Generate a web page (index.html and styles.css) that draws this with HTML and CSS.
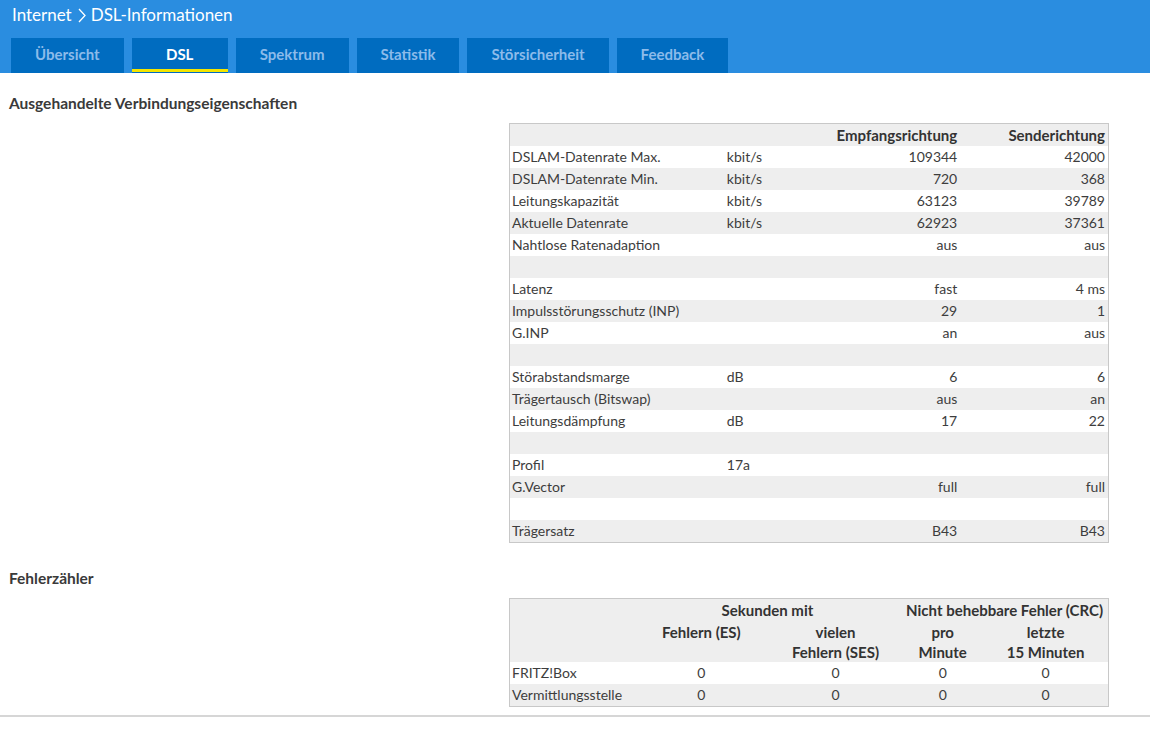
FILE: index.html
```
<!DOCTYPE html>
<html lang="de">
<head>
<meta charset="utf-8">
<title>DSL-Informationen</title>
<link rel="stylesheet" href="styles.css">
</head>
<body>
<header class="top">
  <div class="crumb">
    <span>Internet</span>
    <svg class="chev" width="8" height="15" viewBox="0 0 8 15"><polyline points="1,1 7,7.5 1,14" fill="none" stroke="#ffffff" stroke-width="1.3"/></svg>
    <span>DSL-Informationen</span>
  </div>
  <nav class="tabs">
    <a class="tab">Übersicht</a>
    <a class="tab active">DSL</a>
    <a class="tab">Spektrum</a>
    <a class="tab">Statistik</a>
    <a class="tab">Störsicherheit</a>
    <a class="tab">Feedback</a>
  </nav>
</header>
<main class="content">
  <h2 class="section">Ausgehandelte Verbindungseigenschaften</h2>
  <table class="grid props">
    <colgroup><col class="c1"><col class="c2"><col class="c3"><col class="c4"></colgroup>
    <thead>
      <tr><th></th><th></th><th class="r">Empfangsrichtung</th><th class="r">Senderichtung</th></tr>
    </thead>
    <tbody>
      <tr><td>DSLAM-Datenrate Max.</td><td>kbit/s</td><td class="r">109344</td><td class="r">42000</td></tr>
      <tr><td>DSLAM-Datenrate Min.</td><td>kbit/s</td><td class="r">720</td><td class="r">368</td></tr>
      <tr><td>Leitungskapazität</td><td>kbit/s</td><td class="r">63123</td><td class="r">39789</td></tr>
      <tr><td>Aktuelle Datenrate</td><td>kbit/s</td><td class="r">62923</td><td class="r">37361</td></tr>
      <tr><td>Nahtlose Ratenadaption</td><td></td><td class="r">aus</td><td class="r">aus</td></tr>
      <tr><td></td><td></td><td></td><td></td></tr>
      <tr><td>Latenz</td><td></td><td class="r">fast</td><td class="r">4 ms</td></tr>
      <tr><td>Impulsstörungsschutz (INP)</td><td></td><td class="r">29</td><td class="r">1</td></tr>
      <tr><td>G.INP</td><td></td><td class="r">an</td><td class="r">aus</td></tr>
      <tr><td></td><td></td><td></td><td></td></tr>
      <tr><td>Störabstandsmarge</td><td>dB</td><td class="r">6</td><td class="r">6</td></tr>
      <tr><td>Trägertausch (Bitswap)</td><td></td><td class="r">aus</td><td class="r">an</td></tr>
      <tr><td>Leitungsdämpfung</td><td>dB</td><td class="r">17</td><td class="r">22</td></tr>
      <tr><td></td><td></td><td></td><td></td></tr>
      <tr><td>Profil</td><td>17a</td><td></td><td></td></tr>
      <tr><td>G.Vector</td><td></td><td class="r">full</td><td class="r">full</td></tr>
      <tr><td></td><td></td><td></td><td></td></tr>
      <tr><td>Trägersatz</td><td></td><td class="r">B43</td><td class="r">B43</td></tr>
    </tbody>
  </table>

  <h2 class="section second">Fehlerzähler</h2>
  <table class="grid errors">
    <colgroup><col class="e1"><col class="e2"><col class="e3"><col class="e4"><col class="e5"></colgroup>
    <thead>
      <tr class="h1"><th></th><th colspan="2">Sekunden mit</th><th colspan="2">Nicht behebbare Fehler (CRC)</th></tr>
      <tr class="h2"><th></th><th>Fehlern (ES)</th><th>vielen<br>Fehlern (SES)</th><th>pro<br>Minute</th><th>letzte<br>15 Minuten</th></tr>
    </thead>
    <tbody>
      <tr><td>FRITZ!Box</td><td class="c">0</td><td class="c">0</td><td class="c">0</td><td class="c">0</td></tr>
      <tr><td>Vermittlungsstelle</td><td class="c">0</td><td class="c">0</td><td class="c">0</td><td class="c">0</td></tr>
    </tbody>
  </table>
</main>
<div class="rule"></div>
</body>
</html>
```
FILE: styles.css
```
html, body {
  margin: 0;
  padding: 0;
  background: #ffffff;
}
body {
  font-family: "Lato", "Open Sans", "Liberation Sans", sans-serif;
  font-size: 14px;
  color: #3d3d3d;
}
.top {
  background: #2a8de0;
  height: 73px;
  padding: 3px 0 0 11px;
  box-sizing: border-box;
  display: flex;
  flex-direction: column;
}
.crumb {
  display: flex;
  align-items: center;
  gap: 5px;
  color: #ffffff;
  font-size: 17px;
  line-height: 24px;
  height: 24px;
  padding-left: 1px;
}
.chev {
  display: block;
  margin: 0 0 0 1px;
}
.tabs {
  display: flex;
  gap: 8px;
  margin-top: 11px;
}
.tab {
  box-sizing: border-box;
  height: 35px;
  min-width: 96px;
  padding: 0 24px 3px;
  background: #006cc0;
  color: #8cbbea;
  font-weight: 700;
  font-size: 15px;
  display: flex;
  align-items: center;
  justify-content: center;
  position: relative;
}
.tab.active {
  color: #ffffff;
}
.tab.active::after {
  content: "";
  position: absolute;
  left: 0;
  right: 0;
  bottom: 1px;
  height: 3px;
  background: #f4e500;
}
.content {
  padding: 0 8px;
}
.section {
  margin: 0;
  padding-top: 20px;
  height: 30px;
  line-height: 20px;
  font-size: 15.5px;
  font-weight: 700;
  color: #3a3a3a;
  padding-left: 1px;
}
.section.second {
  padding-top: 25px;
  height: 30px;
}
.grid {
  margin-left: 501px;
  width: 600px;
  border: 1px solid #c8c8c8;
  border-collapse: collapse;
  table-layout: fixed;
}
.grid th, .grid td {
  height: 22px;
  padding: 0 3px 0 2px;
  line-height: 22px;
  white-space: nowrap;
  text-align: left;
  font-weight: 400;
}
.grid th {
  font-weight: 700;
  font-size: 15px;
  color: #333333;
}
.props thead th {
  background: #eeeeee;
}
.props tbody tr:nth-child(even) td {
  background: #eeeeee;
}
.grid .r {
  text-align: right;
}
.grid .c {
  text-align: center;
}
.c1 { width: 215px; }
.c2 { width: 85px; }
.c3 { width: 150px; }
.c4 { width: 148px; }
.e1 { width: 124px; }
.e2 { width: 136px; }
.e3 { width: 132px; }
.e4 { width: 82px; }
.e5 { width: 124px; }
.errors thead th {
  background: #eeeeee;
  text-align: center;
}
.errors .h2 th {
  vertical-align: top;
  line-height: 20px;
  height: 41px;
  padding-top: 1px;
  box-sizing: border-box;
}
.errors tbody tr:nth-child(even) td {
  background: #eeeeee;
}
.rule {
  margin-top: 8px;
  border-top: 2px solid #d6d6d6;
}
```
